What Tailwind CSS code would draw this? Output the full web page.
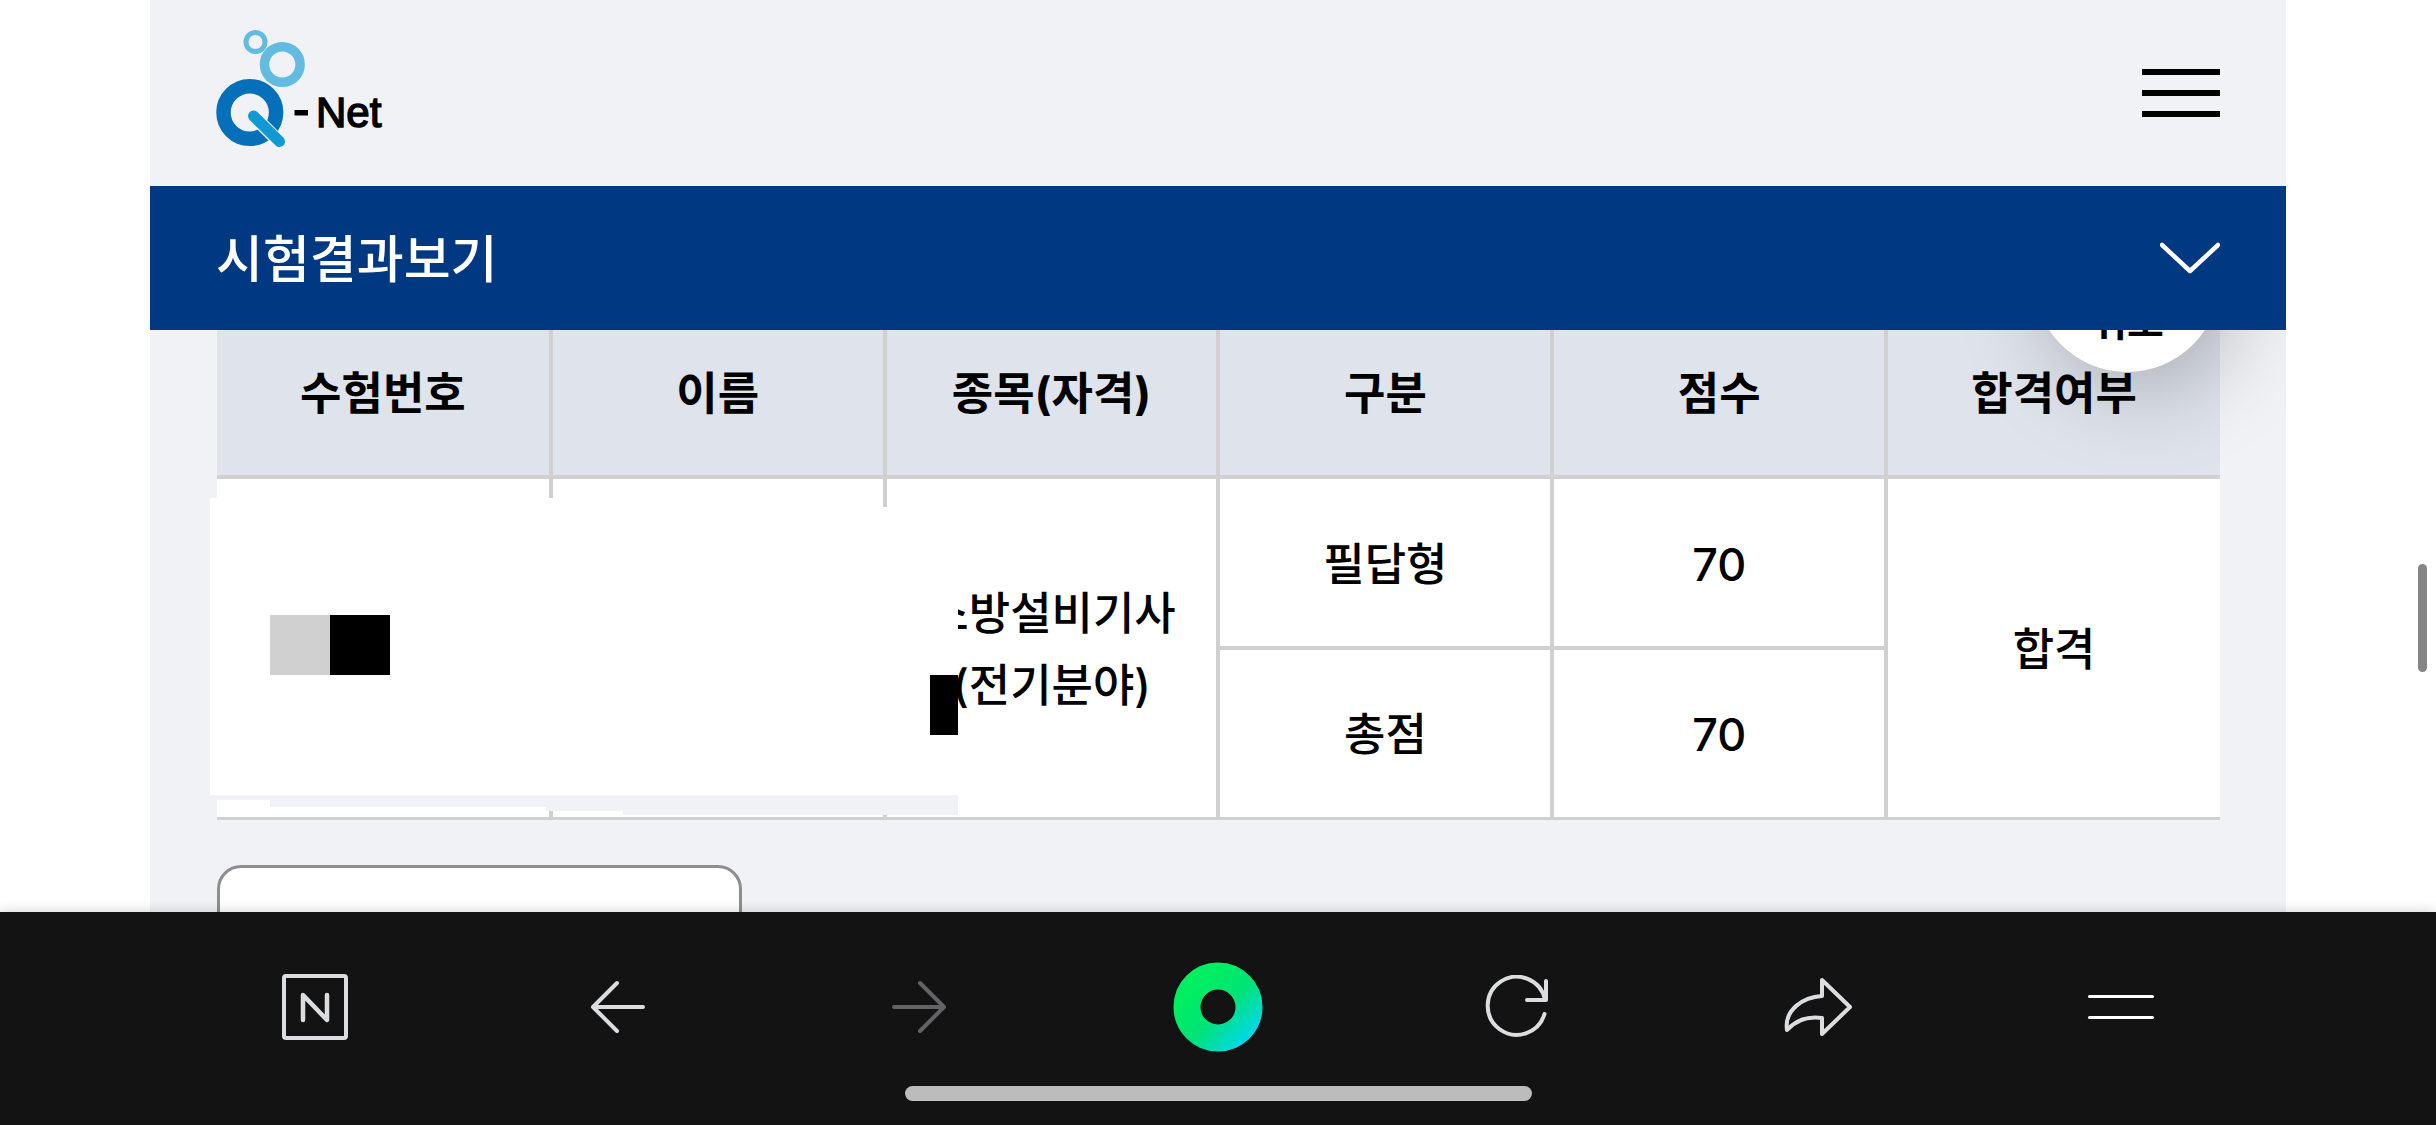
<!DOCTYPE html>
<html lang="ko">
<head>
<meta charset="utf-8">
<title>시험결과보기 - Q-Net</title>
<meta name="viewport" content="width=device-width, initial-scale=1">
<script src="https://cdn.jsdelivr.net/npm/@tailwindcss/browser@4"></script>
</head>
<body class="bg-white text-black font-['Inter','Noto_Sans_CJK_KR',sans-serif]">
<div class="relative flex h-screen flex-col overflow-hidden">
  <div class="mx-[150px] flex min-h-0 flex-1 flex-col overflow-hidden bg-[#f1f2f6]">
    <header class="relative z-20 flex h-[186px] shrink-0 items-center justify-between bg-[#f1f2f6] pr-[66px] pl-[64px]">
      <a href="#" aria-label="Q-Net" class="block">
        <svg width="176" height="126" viewBox="0 0 176 126">
          <circle cx="41.500" cy="12" r="9.500" fill="none" stroke="#62bce1" stroke-width="5"/>
          <circle cx="68.300" cy="34.500" r="17.800" fill="none" stroke="#62bce1" stroke-width="9.500"/>
          <circle cx="35.800" cy="82.500" r="26.300" fill="none" stroke="#066fba" stroke-width="14.500"/>
          <path d="M39.500 86 65.500 112" stroke="#f1f2f6" stroke-width="13.500" stroke-linecap="round"/>
          <path d="M39.500 86 65.500 111.500" stroke="#0f9ad3" stroke-width="11" stroke-linecap="round"/>
          <rect x="80.500" y="80" width="13.500" height="5.500"/>
          <text x="102" y="97" font-family="Liberation Sans, sans-serif" font-size="42" stroke="#000" stroke-width="1.500" fill="#000">Net</text>
        </svg>
      </a>
      <button type="button" aria-label="전체메뉴" class="flex w-[78px] flex-col gap-[15px]">
        <span class="h-[6px] bg-black"></span><span class="h-[6px] bg-black"></span><span class="h-[6px] bg-black"></span>
      </button>
    </header>
    <button type="button" class="relative z-20 flex h-36 shrink-0 items-center justify-between bg-[#003882] px-[66px] text-white">
      <span class="pt-1 text-[51px] leading-[72px] font-medium">시험결과보기</span>
      <svg width="60" height="32" viewBox="0 0 60 32" fill="none" stroke="currentColor" stroke-width="4.500" stroke-linecap="round" stroke-linejoin="round"><path d="M2 3 30 29 58 3"/></svg>
    </button>

    <main class="relative flex-1 pr-[66px] pl-[67px]">
      <div class="relative -mt-[21px]">
        <table class="w-full table-fixed border-collapse bg-white text-center text-[45px] leading-[72px] font-medium [&_td]:pt-1 [&_th]:pt-1">
          <thead>
            <tr class="h-[168px] border-b-4 border-[#d0d0d0] bg-[#dfe3ec]">
              <th scope="col" class="border-r-4 border-[#d0d0d0] font-bold">수험번호</th>
              <th scope="col" class="border-r-4 border-[#d0d0d0] font-bold">이름</th>
              <th scope="col" class="border-r-4 border-[#d0d0d0] font-bold">종목(자격)</th>
              <th scope="col" class="border-r-4 border-[#d0d0d0] font-bold">구분</th>
              <th scope="col" class="border-r-4 border-[#d0d0d0] font-bold">점수</th>
              <th scope="col" class="font-bold">합격여부</th>
            </tr>
          </thead>
          <tbody>
            <tr class="h-[171px]">
              <td rowspan="2" class="border-r-4 border-b-3 border-[#d0d0d0]"></td>
              <td rowspan="2" class="border-r-4 border-b-3 border-[#d0d0d0]"></td>
              <td rowspan="2" class="border-r-4 border-b-3 border-[#d0d0d0]">소방설비기사<br>(전기분야)</td>
              <td class="border-r-4 border-b-4 border-[#d0d0d0]">필답형</td>
              <td class="border-r-4 border-b-4 border-[#d0d0d0]">70</td>
              <td rowspan="2" class="border-b-3 border-[#d0d0d0]">합격</td>
            </tr>
            <tr class="h-[170px]">
              <td class="border-r-4 border-b-3 border-[#d0d0d0]">총점</td>
              <td class="border-r-4 border-b-3 border-[#d0d0d0]">70</td>
            </tr>
          </tbody>
        </table>
        <!-- cover over the personal details -->
        <svg class="absolute top-[189px] -left-[7px]" width="748" height="317" viewBox="0 0 748 317" shape-rendering="crispEdges" aria-hidden="true">
          <path fill="#fff" d="M0 0H600V9H748V297H0z"/>
          <path fill="#f1f2f6" d="M0 297H748V317H413V313H336V309H60V302H0z"/>
          <path fill="#d0d0d0" d="M60 117h60v60H60z"/>
          <path fill="#000" d="M120 117h60v60h-60zM720 177h28v60h-28z"/>
        </svg>
      </div>
      <button type="button" aria-label="이전" class="mt-[45px] block h-[132px] w-[525px] rounded-3xl border-3 border-[#8e8e90] bg-white"></button>
      <button type="button" class="absolute -top-[144px] right-[66px] flex size-[186px] items-end justify-center rounded-full bg-white pb-[26px] text-[40px] leading-[48px] font-bold shadow-[15px_15px_90px_rgba(0,0,0,0.25)]">위로</button>
    </main>
  </div>

  <div class="absolute top-[564px] right-[9px] h-[108px] w-[9px] rounded-full bg-[#858585]"></div>

  <footer class="relative z-30 flex h-[213px] shrink-0 flex-col items-center bg-[#131313] pt-[50px] text-[#dcdde0] shadow-[0_0_12px_rgba(0,0,0,0.2)]">
    <nav class="flex w-full justify-between px-[270px]">
      <button type="button" aria-label="네이버 홈" class="flex size-[90px] items-center justify-center">
        <svg width="66" height="66" viewBox="0 0 66 66" fill="none" stroke="currentColor" stroke-width="4" stroke-linejoin="round" stroke-linecap="round"><rect x="2" y="2" width="62" height="62" rx="2"/><path d="M21 46V21L45 46V21" stroke-width="4.500"/></svg>
      </button>
      <button type="button" aria-label="뒤로" class="flex size-[90px] items-center justify-center">
        <svg width="58" height="54" viewBox="-4 0 58 54" fill="none" stroke="currentColor" stroke-width="4" stroke-linejoin="round" stroke-linecap="round"><path d="M26 3 2 27l24 24M2 27h50"/></svg>
      </button>
      <button type="button" aria-label="앞으로" class="flex size-[90px] items-center justify-center text-[#636365]">
        <svg width="58" height="54" viewBox="-4 0 58 54" fill="none" stroke="currentColor" stroke-width="4" stroke-linejoin="round" stroke-linecap="round"><path d="m28 3 24 24-24 24M52 27H2"/></svg>
      </button>
      <button type="button" aria-label="그린닷" class="flex size-[90px] items-center justify-center">
        <svg width="90" height="90" viewBox="0 0 90 90" fill="none"><defs><linearGradient id="dot" x1="0.150" y1="0.150" x2="1" y2="1"><stop offset="0" stop-color="#00ee60"/><stop offset="0.500" stop-color="#00e27a"/><stop offset="1" stop-color="#00d8ea"/></linearGradient></defs><circle cx="45" cy="45" r="31" stroke="url(#dot)" stroke-width="27"/></svg>
      </button>
      <button type="button" aria-label="새로고침" class="flex size-[90px] items-center justify-center">
        <svg width="68" height="64" viewBox="0 0 68 64" fill="none" stroke="currentColor" stroke-width="4" stroke-linejoin="round" stroke-linecap="round"><path d="M59.500 39A29 29 0 1 1 60 24.500M61 6V25H42"/></svg>
      </button>
      <button type="button" aria-label="공유" class="flex size-[90px] items-center justify-center">
        <svg width="74" height="58" viewBox="0 0 74 58" fill="none" stroke="currentColor" stroke-width="4" stroke-linejoin="round" stroke-linecap="round"><path d="M39 2 67 29 39 56V40C25 38 13 42 4 52 1 32 20 19 39 18z"/></svg>
      </button>
      <button type="button" aria-label="메뉴" class="flex size-[90px] flex-col items-center justify-center gap-[18px]">
        <span class="h-[3px] w-[66px] rounded-full bg-white"></span><span class="h-[3px] w-[66px] rounded-full bg-white"></span>
      </button>
    </nav>
    <div class="mt-[34px] h-[15px] w-[627px] rounded-full bg-[#bcbcbc]"></div>
  </footer>
</div>
</body>
</html>
